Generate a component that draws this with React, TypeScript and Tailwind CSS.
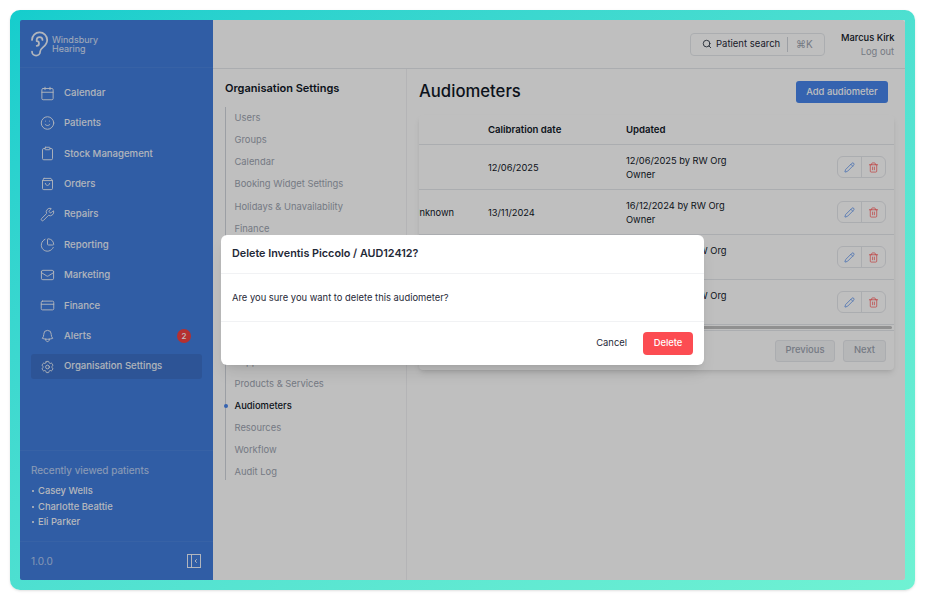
import type { ReactNode } from "react";
import { Calendar, ChartPie, Clipboard, CreditCard, Ear, Pencil, Search, Smile, Trash2, Wrench } from "lucide-react";
import { HiOutlineBell, HiOutlineCog6Tooth, HiOutlineEnvelope } from "react-icons/hi2";

function OrdersIcon({ className }: { className?: string }) {
  return (
    <svg viewBox="0 0 24 24" fill="none" stroke="currentColor" strokeWidth={1.5} strokeLinecap="round" strokeLinejoin="round" className={className}>
      <path d="M6.5 3h11L20 6.5V19a2 2 0 0 1-2 2H6a2 2 0 0 1-2-2V6.5L6.5 3Z" />
      <path d="M4 6.5h16" />
      <path d="M8.5 11c.6 2.2 1.9 3.3 3.5 3.3s2.9-1.1 3.5-3.3" />
    </svg>
  );
}

const navItems: { label: string; icon: ReactNode }[] = [
  { label: "Calendar", icon: <Calendar strokeWidth={1.5} className="w-[15px] h-[15px]" /> },
  { label: "Patients", icon: <Smile strokeWidth={1.5} className="w-[16px] h-[16px]" /> },
  { label: "Stock Management", icon: <Clipboard strokeWidth={1.5} className="w-[15px] h-[15px]" /> },
  { label: "Orders", icon: <OrdersIcon className="w-[16px] h-[16px]" /> },
  { label: "Repairs", icon: <Wrench strokeWidth={1.5} className="w-[15px] h-[15px]" /> },
  { label: "Reporting", icon: <ChartPie strokeWidth={1.5} className="w-[16px] h-[16px]" /> },
  { label: "Marketing", icon: <HiOutlineEnvelope className="w-[16px] h-[16px]" /> },
  { label: "Finance", icon: <CreditCard strokeWidth={1.5} className="w-[17px] h-[17px]" /> },
  { label: "Alerts", icon: <HiOutlineBell className="w-[16px] h-[16px]" /> },
  { label: "Organisation Settings", icon: <HiOutlineCog6Tooth className="w-[16px] h-[16px]" /> },
];

const settingsItems = [
  "Users",
  "Groups",
  "Calendar",
  "Booking Widget Settings",
  "Holidays & Unavailability",
  "Finance",
  "Clinics",
  "Rooms",
  "Templates",
  "Documents",
  "Communications",
  "Suppliers",
  "Products & Services",
  "Audiometers",
  "Resources",
  "Workflow",
  "Audit Log",
];

const rows = [
  { serial: "", calibration: "12/06/2025", updated: "12/06/2025 by RW Org" },
  { serial: "Unknown", calibration: "13/11/2024", updated: "16/12/2024 by RW Org" },
  { serial: "", calibration: "12/06/2025", updated: "12/06/2025 by RW Org" },
  { serial: "", calibration: "13/11/2024", updated: "12/06/2025 by RW Org" },
];

function Sidebar() {
  return (
    <aside className="w-[193px] shrink-0 flex flex-col bg-[#417cdc] text-white">
      <div className="h-[48px] shrink-0 flex items-center pl-[5px] border-b border-white/5">
        <Ear strokeWidth={1.5} className="w-[28px] h-[28px] text-white/90" />
        <div className="ml-[-1px] mt-[1px] text-[9px] leading-[9px] text-white/80">
          Windsbury
          <br />
          Hearing
        </div>
      </div>
      <nav className="flex flex-col gap-[5.4px] px-[11px] pt-[12.5px]">
        {navItems.map((item) => (
          <div
            key={item.label}
            className={`h-[25px] flex items-center rounded-[3px] pl-[9px] pr-[11px] text-[9.6px] font-medium ${
              item.label === "Organisation Settings" ? "bg-[#3c70c8]" : ""
            }`}
          >
            <span className="w-[15px] flex justify-center opacity-90">{item.icon}</span>
            <span className="ml-[9px] flex-1 opacity-90">{item.label}</span>
            {item.label === "Alerts" && (
              <span className="w-[14px] h-[14px] rounded-full bg-[#f24040] flex items-center justify-center text-[8px] leading-none">
                2
              </span>
            )}
          </div>
        ))}
      </nav>
      <div className="mt-auto border-t border-white/5 h-[91px] pt-[12px] px-[11px]">
        <p className="text-[10px] leading-[14px] text-white/65">Recently viewed patients</p>
        <ul className="mt-[6px] text-[9.4px] font-medium text-white/95">
          {["Casey Wells", "Charlotte Beattie", "Eli Parker"].map((name) => (
            <li key={name} className="h-[15.7px] leading-[15.7px] flex items-center">
              <span className="w-[2px] h-[2px] bg-white rounded-full ml-[1px] mr-[4px]" />
              {name}
            </li>
          ))}
        </ul>
      </div>
      <div className="h-[39px] shrink-0 border-t border-white/5 flex items-center justify-between pl-[11px] pr-[12px]">
        <span className="text-[10px] text-white/60">1.0.0</span>
        <svg viewBox="0 0 14 14" fill="none" stroke="currentColor" strokeWidth={1} className="w-[14px] h-[14px] text-white/90">
          <rect x="0.5" y="0.5" width="13" height="13" />
          <path d="M4.5 0.5v13" />
          <path d="M9.8 5.3 8 7l1.8 1.7" />
        </svg>
      </div>
    </aside>
  );
}

function Header() {
  return (
    <header className="h-[49px] shrink-0 bg-white border-b border-[#e5e7eb] flex items-center justify-end pl-4 pr-[11px]">
      <div className="h-[23px] w-[135px] flex items-center rounded-[4px] border border-[#e5e7eb] text-[9.5px] text-[#1f2937]">
        <Search strokeWidth={2} className="w-[10px] h-[10px] ml-[11px] mr-[4px]" />
        <span className="flex-1">Patient search</span>
        <span className="h-[15px] w-[37px] border-l border-[#d1d5db] pl-[8px] leading-[15px] text-[10px] text-[#9ca3af]">⌘K</span>
      </div>
      <div className="ml-[16px] pt-[1px] text-right text-[9.3px] leading-[14px] w-[53px]">
        <div className="font-medium text-[#111827] whitespace-nowrap">Marcus Kirk</div>
        <div className="text-[#9ca3af] whitespace-nowrap">Log out</div>
      </div>
    </header>
  );
}

function SettingsNav() {
  return (
    <div className="w-[194px] shrink-0 border-r border-[#f0f1f3] bg-white pt-[12px] pl-[12px]">
      <h2 className="text-[11px] leading-[14px] font-semibold text-[#111827]">Organisation Settings</h2>
      <ul className="mt-[12px] h-[373px] border-l border-[#d1d5db] pl-[8.5px] w-[170px]">
        {settingsItems.map((item) => (
          <li
            key={item}
            className={`relative h-[22.15px] leading-[21px] text-[9.4px] whitespace-nowrap ${
              item === "Audiometers" ? "text-[#111827] font-medium" : "text-[#9ca3af]"
            }`}
          >
            {item === "Audiometers" && (
              <span className="absolute left-[-11px] top-[9px] w-[4px] h-[4px] rounded-full bg-[#4784eb]" />
            )}
            {item}
          </li>
        ))}
      </ul>
    </div>
  );
}

function AudiometerTable() {
  const gridCols = "grid grid-cols-[69px_138px_1fr_auto] items-center";
  return (
    <div className="mt-[12px] rounded-[4px] bg-white shadow-md overflow-hidden">
      <div className={`${gridCols} h-[30px] pt-[1px] border-b border-[#e5e7eb] text-[9.6px] font-semibold text-[#111827]`}>
        <span />
        <span>Calibration date</span>
        <span>Updated</span>
      </div>
      {rows.map((row, i) => (
        <div key={i} className={`${gridCols} h-[45px] border-b border-[#e5e7eb] text-[9.3px] leading-[14px] text-[#111827]`}>
          <span className="pt-[1px] overflow-hidden whitespace-nowrap flex justify-end pr-[34px]">{row.serial}</span>
          <span className="pt-[1px]">{row.calibration}</span>
          <div className="pt-[1px]">
            <div>{row.updated}</div>
            <div>Owner</div>
          </div>
          <div className="mr-[8px] flex h-[22px] w-[49px] rounded-[6px] border border-[#e5e7eb] items-center">
            <span className="flex-1 h-full flex items-center justify-center border-r border-[#e5e7eb]">
              <Pencil strokeWidth={1.5} className="w-[11px] h-[11px] text-[#4784eb]" />
            </span>
            <span className="flex-1 flex items-center justify-center">
              <Trash2 strokeWidth={1.5} className="w-[11px] h-[11px] text-[#ff4d4d]" />
            </span>
          </div>
        </div>
      ))}
      <div className="h-[5px] flex items-center">
        <div className="h-[3.5px] w-[473px] rounded-full bg-[#c0c0c0]" />
      </div>
      <div className="h-[40px] border-t border-[#e5e7eb] flex items-center justify-end gap-[8px] pr-[8px] text-[9.4px] font-medium text-[#9ca3af]">
        <span className="w-[60px] h-[22px] rounded-[3px] border border-[#e5e7eb] bg-[#f3f4f6] flex items-center justify-center">Previous</span>
        <span className="w-[43px] h-[22px] rounded-[3px] border border-[#e5e7eb] bg-[#f3f4f6] flex items-center justify-center">Next</span>
      </div>
    </div>
  );
}

function DeleteModal() {
  return (
    <div className="absolute inset-0 bg-black/25 flex items-center justify-center">
      <div className="w-[483px] h-[130px] bg-white rounded-[6px] shadow-lg flex flex-col text-[#1f2937]">
        <div className="h-[39px] shrink-0 pt-[1px] border-b border-[#f1f2f4] flex items-center px-[11px] text-[10.8px] font-semibold">
          Delete Inventis Piccolo / AUD12412?
        </div>
        <div className="h-[48px] shrink-0 pt-[1px] border-b border-[#f1f2f4] flex items-center px-[11px] text-[9.4px]">
          Are you sure you want to delete this audiometer?
        </div>
        <div className="flex-1 flex items-center justify-end pr-[11px] text-[9.4px]">
          <span className="mr-[16px]">Cancel</span>
          <span className="w-[50px] h-[23px] rounded-[4px] bg-[#fc4c52] text-white font-medium flex items-center justify-center">Delete</span>
        </div>
      </div>
    </div>
  );
}

export default function App() {
  return (
    <div className="w-[925px] h-[600px] bg-white p-[10px] font-['Inter',sans-serif]">
      <div className="h-full rounded-[10px] p-[10px] bg-linear-to-br from-[#14cdcd] to-[#70f2d3] shadow-sm">
        <div className="relative h-full flex rounded-[2px] overflow-hidden">
          <Sidebar />
          <div className="flex-1 flex flex-col min-w-0 bg-white">
            <Header />
            <div className="flex flex-1 min-h-0">
              <SettingsNav />
              <main className="flex-1 min-w-0 pt-[11px] pl-[12px] pr-[11px]">
                <div className="flex items-center justify-between h-[23px]">
                  <h1 className="text-[16.7px] font-medium text-[#111827]">Audiometers</h1>
                  <span className="mr-[6px] pt-[1px] w-[92px] h-[22px] rounded-[3px] bg-[#4784eb] text-white text-[9.4px] font-medium flex items-center justify-center">
                    Add audiometer
                  </span>
                </div>
                <AudiometerTable />
              </main>
            </div>
          </div>
          <DeleteModal />
        </div>
      </div>
    </div>
  );
}
